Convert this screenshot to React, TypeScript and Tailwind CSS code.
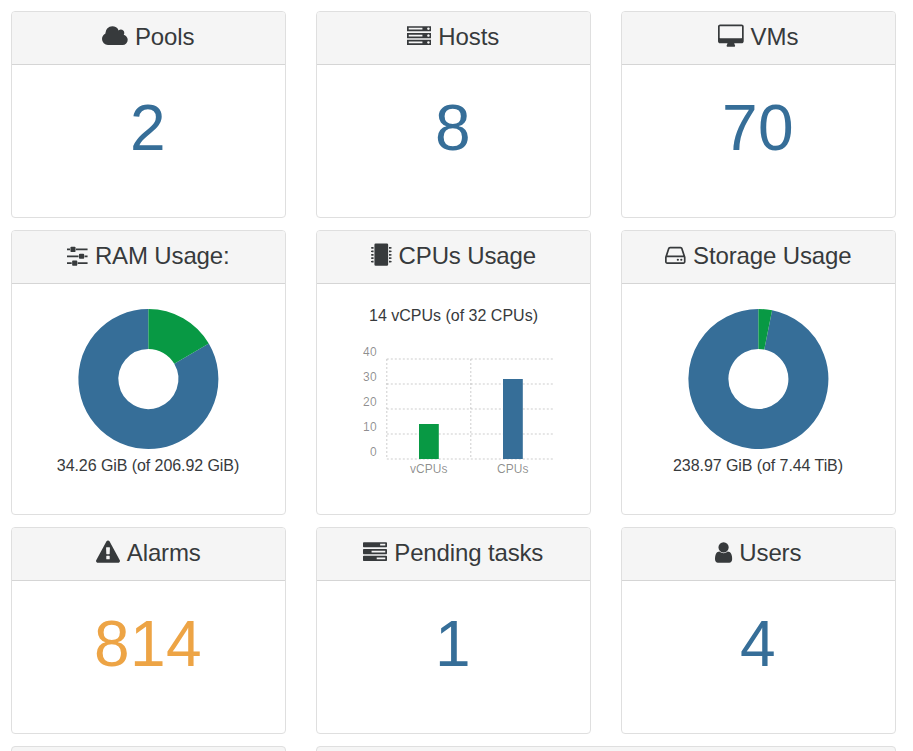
import React from 'react';

type IconProps = { path: string; box: string; w: string };

function Icon({ path, box, w }: IconProps) {
  return (
    <svg viewBox={box} preserveAspectRatio="xMinYMin meet" className={`${w} inline-block h-6 overflow-visible align-[-4px]`} fill="currentColor" aria-hidden="true">
      <path d={path} transform="translate(0 -43)" />
    </svg>
  );
}

const icons = {
  cloud: {
    box: '64 0 1920 1792',
    w: 'w-[25.72px]',
    path: 'M1984 1152q0 159-112.5 271.5t-271.5 112.5h-1088q-185 0-316.5-131.5t-131.5-316.5q0-132 71-241.5t187-163.5q-2-28-2-43 0-212 150-362t362-150q158 0 286.5 88t187.5 230q70-62 166-62 106 0 181 75t75 181q0 75-41 138 129 30 213 134.5t84 239.5z',
  },
  server: {
    box: '0 0 1792 1792',
    w: 'w-6',
    path: 'M128 1408h1024v-128h-1024v128zm0-512h1024v-128h-1024v128zm1568 448q0-40-28-68t-68-28-68 28-28 68 28 68 68 28 68-28 28-68zm-1568-960h1024v-128h-1024v128zm1568 448q0-40-28-68t-68-28-68 28-28 68 28 68 68 28 68-28 28-68zm0-512q0-40-28-68t-68-28-68 28-28 68 28 68 68 28 68-28 28-68zm96 832v384h-1792v-384h1792zm0-512v384h-1792v-384h1792zm0-512v384h-1792v-384h1792z',
  },
  desktop: {
    box: '0 0 1920 1792',
    w: 'w-[25.72px]',
    path: 'M1792 992v-832q0-13-9.5-22.5t-22.5-9.5h-1600q-13 0-22.5 9.5t-9.5 22.5v832q0 13 9.5 22.5t22.5 9.5h1600q13 0 22.5-9.5t9.5-22.5zm128-832v1088q0 66-47 113t-113 47h-544q0 37 16 77.5t32 71 16 43.5q0 26-19 45t-45 19h-512q-26 0-45-19t-19-45q0-14 16-44t32-70 16-78h-544q-66 0-113-47t-47-113v-1088q0-66 47-113t113-47h1600q66 0 113 47t47 113z',
  },
  sliders: {
    box: '128 0 1536 1792',
    w: 'w-[21px]',
    path: 'M480 1408v128h-352v-128h352zm352-128q26 0 45 19t19 45v256q0 26-19 45t-45 19h-256q-26 0-45-19t-19-45v-256q0-26 19-45t45-19h256zm160-384v128h-864v-128h864zm-640-512v128h-224v-128h224zm1312 1024v128h-736v-128h736zm-960-1152q26 0 45 19t19 45v256q0 26-19 45t-45 19h-256q-26 0-45-19t-19-45v-256q0-26 19-45t45-19h256zm640 512q26 0 45 19t19 45v256q0 26-19 45t-45 19h-256q-26 0-45-19t-19-45v-256q0-26 19-45t45-19h256zm320 128v128h-224v-128h224zm0-512v128h-864v-128h864z',
  },
  chip: {
    box: '0 0 1536 1792',
    w: 'w-[21px]',
    path: 'M352 0h832q96 0 96 96v1472q0 96-96 96h-832q-96 0-96-96v-1472q0-96 96-96zM0 288h64v-16h128v128h-128v-16h-64zM0 544h64v-16h128v128h-128v-16h-64zM0 800h64v-16h128v128h-128v-16h-64zM0 1056h64v-16h128v128h-128v-16h-64zM0 1312h64v-16h128v128h-128v-16h-64zM1536 288h-64v-16h-128v128h128v-16h64zM1536 544h-64v-16h-128v128h128v-16h64zM1536 800h-64v-16h-128v128h128v-16h64zM1536 1056h-64v-16h-128v128h128v-16h64zM1536 1312h-64v-16h-128v128h128v-16h64z',
  },
  disk: {
    box: '128 0 1536 1792',
    w: 'w-[21px]',
    path: 'M1168 1216q0 33-23.5 56.5t-56.5 23.5-56.5-23.5-23.5-56.5 23.5-56.5 56.5-23.5 56.5 23.5 23.5 56.5zm256 0q0 33-23.5 56.5t-56.5 23.5-56.5-23.5-23.5-56.5 23.5-56.5 56.5-23.5 56.5 23.5 23.5 56.5zm112 160v-320q0-13-9.5-22.5t-22.5-9.5h-1216q-13 0-22.5 9.5t-9.5 22.5v320q0 13 9.5 22.5t22.5 9.5h1216q13 0 22.5-9.5t9.5-22.5zm-1230-480h1180l-157-482q-4-13-16-21.5t-26-8.5h-782q-14 0-26 8.5t-16 21.5zm1358 160v320q0 66-47 113t-113 47h-1216q-66 0-113-47t-47-113v-320q0-25 16-75l197-606q17-53 63-86t101-33h782q55 0 101 33t63 86l197 606q16 50 16 75z',
  },
  warning: {
    box: '0 0 1792 1792',
    w: 'w-6',
    path: 'M1024 1375v-190q0-14-9.5-23.5t-22.5-9.5h-192q-13 0-22.5 9.5t-9.5 23.5v190q0 14 9.5 23.5t22.5 9.5h192q13 0 22.5-9.5t9.5-23.5zm-2-374l18-459q0-12-10-19-13-11-24-11h-220q-11 0-24 11-10 7-10 21l17 457q0 10 10 16.5t24 6.5h185q14 0 23.5-6.5t10.5-16.5zm-14-934l768 1408q35 63-2 126-17 29-46.5 46t-63.5 17h-1536q-34 0-63.5-17t-46.5-46q-37-63-2-126l768-1408q17-31 47-49t65-18 65 18 47 49z',
  },
  tasks: {
    box: '0 0 1792 1792',
    w: 'w-6',
    path: 'M1024 1408h640v-128h-640v128zm-384-512h1024v-128h-1024v128zm640-512h384v-128h-384v128zm512 832v256q0 26-19 45t-45 19h-1664q-26 0-45-19t-19-45v-256q0-26 19-45t45-19h1664q26 0 45 19t19 45zm0-512v256q0 26-19 45t-45 19h-1664q-26 0-45-19t-19-45v-256q0-26 19-45t45-19h1664q26 0 45 19t19 45zm0-512v256q0 26-19 45t-45 19h-1664q-26 0-45-19t-19-45v-256q0-26 19-45t45-19h1664q26 0 45 19t19 45z',
  },
  user: {
    box: '256 0 1280 1792',
    w: 'w-[17.15px]',
    path: 'M1536 1399q0 109-62.5 187t-150.5 78h-854q-88 0-150.5-78t-62.5-187q0-85 8.5-160.5t31.5-152 58.5-131 94-89 134.5-34.5q131 128 313 128t313-128q76 0 134.5 34.5t94 89 58.5 131 31.5 152 8.5 160.5zm-256-887q0 159-112.5 271.5t-271.5 112.5-271.5-112.5-112.5-271.5 112.5-271.5 271.5-112.5 271.5 112.5 112.5 271.5z',
  },
};

type CardProps = {
  icon: IconProps;
  title: string;
  height?: string;
  tracking?: string;
  children: React.ReactNode;
};

function Card({ icon, title, height = 'h-[207px]', tracking = 'tracking-[-0.14px]', children }: CardProps) {
  return (
    <section className={`${height} overflow-hidden rounded border border-[#dfdfdf] bg-white text-center`}>
      <h2 className="h-[53px] border-b border-[#d5d5d5] bg-[#f5f5f5] pt-3 pr-[0.5px] text-2xl leading-[26px]">
        <Icon {...icon} />
        <span className={`ml-[7px] ${tracking}`}>{title}</span>
      </h2>
      {children}
    </section>
  );
}

function Count({ value, color = 'text-[#366e98]' }: { value: number; color?: string }) {
  return <p className={`pt-[27px] pr-px text-[64px] leading-[72px] tracking-[0.4px] ${color}`}>{value}</p>;
}

function Donut({ share, label }: { share: number; label: string }) {
  const angle = share * 2 * Math.PI;
  const x = 70 + 50 * Math.sin(angle);
  const y = 70 - 50 * Math.cos(angle);
  return (
    <div className="flex flex-col items-center pt-[25px] pr-px">
      <svg width="140" height="140" viewBox="-0.4 0 140 140" fill="none" strokeWidth="40" className="overflow-visible">
        <path d={`M${x} ${y}A50 50 0 1 1 70 20`} stroke="#366e98" />
        <path d={`M70 20A50 50 0 0 1 ${x} ${y}`} stroke="#089944" />
      </svg>
      <p className="mt-[5px] text-base leading-6 tracking-[-0.07px]">{label}</p>
    </div>
  );
}

function CpuChart() {
  return (
    <div className="flex flex-col items-center pt-5">
      <p className="text-base leading-6">14 vCPUs (of 32 CPUs)</p>
      <svg width="273" height="150" viewBox="317 328 273 150" className="text-xs">
        <g stroke="#000" strokeOpacity="0.2" strokeDasharray="2 2">
          {[459, 434, 409, 384, 359].map((y) => (
            <line key={y} x1="386.8" x2="554.5" y1={y} y2={y} />
          ))}
          <line x1="386.8" x2="386.8" y1="359" y2="459" />
          <line x1="470.8" x2="470.8" y1="359" y2="459" />
        </g>
        <rect x="419" y="424" width="19.8" height="35" fill="#089944" />
        <rect x="503" y="379" width="19.8" height="80" fill="#366e98" />
        <g fill="#000" fillOpacity="0.45" textAnchor="end">
          {[40, 30, 20, 10, 0].map((n, i) => (
            <text key={n} x="376.8" y={356 + i * 25} className="tracking-[0.2px]">{n}</text>
          ))}
        </g>
        <g fill="#000" fillOpacity="0.45" textAnchor="middle">
          <text x="428.8" y="473" className="tracking-[0.1px]">vCPUs</text>
          <text x="512.8" y="473" className="tracking-[0.1px]">CPUs</text>
        </g>
      </svg>
    </div>
  );
}

export default function App() {
  return (
    <main className="h-[751px] w-[913px] overflow-hidden bg-white px-[11px] pt-[11px] font-['Liberation_Sans',Arial,sans-serif] text-[#373a3c]">
      <div className="grid grid-cols-[275px_275px_275px] gap-x-[30px] gap-y-3">
        <Card icon={icons.cloud} title="Pools"><Count value={2} /></Card>
        <Card icon={icons.server} title="Hosts" tracking="tracking-[-0.07px]"><Count value={8} /></Card>
        <Card icon={icons.desktop} title="VMs" tracking="tracking-normal"><Count value={70} /></Card>
        <Card icon={icons.sliders} title="RAM Usage:" height="h-[285px]">
          <Donut share={34.26 / 206.92} label="34.26 GiB (of 206.92 GiB)" />
        </Card>
        <Card icon={icons.chip} title="CPUs Usage" height="h-[285px]"><CpuChart /></Card>
        <Card icon={icons.disk} title="Storage Usage" height="h-[285px]">
          <Donut share={238.97 / 7618.56} label="238.97 GiB (of 7.44 TiB)" />
        </Card>
        <Card icon={icons.warning} title="Alarms"><Count value={814} color="text-[#eda445]" /></Card>
        <Card icon={icons.tasks} title="Pending tasks"><Count value={1} /></Card>
        <Card icon={icons.user} title="Users"><Count value={4} /></Card>
        <div className="h-14 rounded border border-[#dfdfdf] bg-[#f5f5f5]" />
        <div className="col-span-2 h-14 rounded border border-[#dfdfdf] bg-[#f5f5f5]" />
      </div>
    </main>
  );
}
